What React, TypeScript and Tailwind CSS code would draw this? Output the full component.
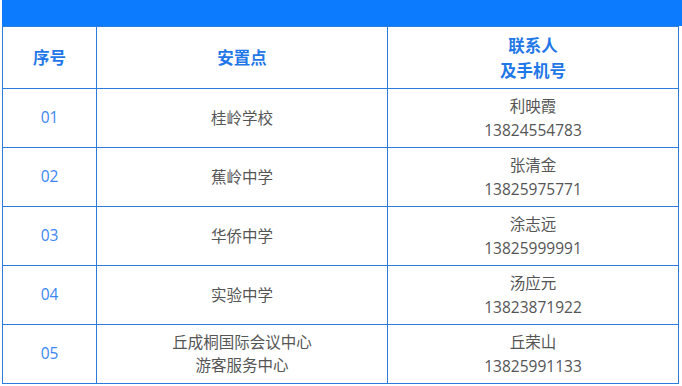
const rows = [
  { no: "01", place: ["桂岭学校"], name: "利映霞", phone: "13824554783" },
  { no: "02", place: ["蕉岭中学"], name: "张清金", phone: "13825975771" },
  { no: "03", place: ["华侨中学"], name: "涂志远", phone: "13825999991" },
  { no: "04", place: ["实验中学"], name: "汤应元", phone: "13823871922" },
  { no: "05", place: ["丘成桐国际会议中心", "游客服务中心"], name: "丘荣山", phone: "13825991133" },
];

const font = "font-['Open_Sans','Noto_Sans_CJK_SC',sans-serif]";

export default function App() {
  return (
    <div className={`w-[682px] h-[386px] bg-white pl-[2px] ${font}`}>
      <div className="h-[26px] bg-[#0c7bfd]" />
      <table className="w-[676px] border-collapse table-fixed">
        <colgroup>
          <col className="w-[94px]" />
          <col className="w-[291px]" />
          <col className="w-[291px]" />
        </colgroup>
        <thead>
          <tr className="h-[62px]">
            <th className="border border-[#2a7ddc] text-[16.5px] font-bold text-[#1f77e8] leading-[25px]">序号</th>
            <th className="border border-[#2a7ddc] text-[16.5px] font-bold text-[#1f77e8] leading-[25px]">安置点</th>
            <th className="border border-[#2a7ddc] text-[16.5px] font-bold text-[#1f77e8] leading-[25px]">
              <div>联系人</div>
              <div>及手机号</div>
            </th>
          </tr>
        </thead>
        <tbody>
          {rows.map((r) => (
            <tr key={r.no} className="h-[59px]">
              <td className="border border-[#2a7ddc] text-center text-[15.5px] text-[#3b86f2]">{r.no}</td>
              <td className="border border-[#2a7ddc] text-center text-[15.5px] text-[#555] leading-[23px]">
                {r.place.map((p) => (
                  <div key={p}>{p}</div>
                ))}
              </td>
              <td className="border border-[#2a7ddc] text-center text-[15.5px] text-[#555] leading-[24px]">
                <div>{r.name}</div>
                <div className="text-[15.5px]">{r.phone}</div>
              </td>
            </tr>
          ))}
        </tbody>
      </table>
    </div>
  );
}
